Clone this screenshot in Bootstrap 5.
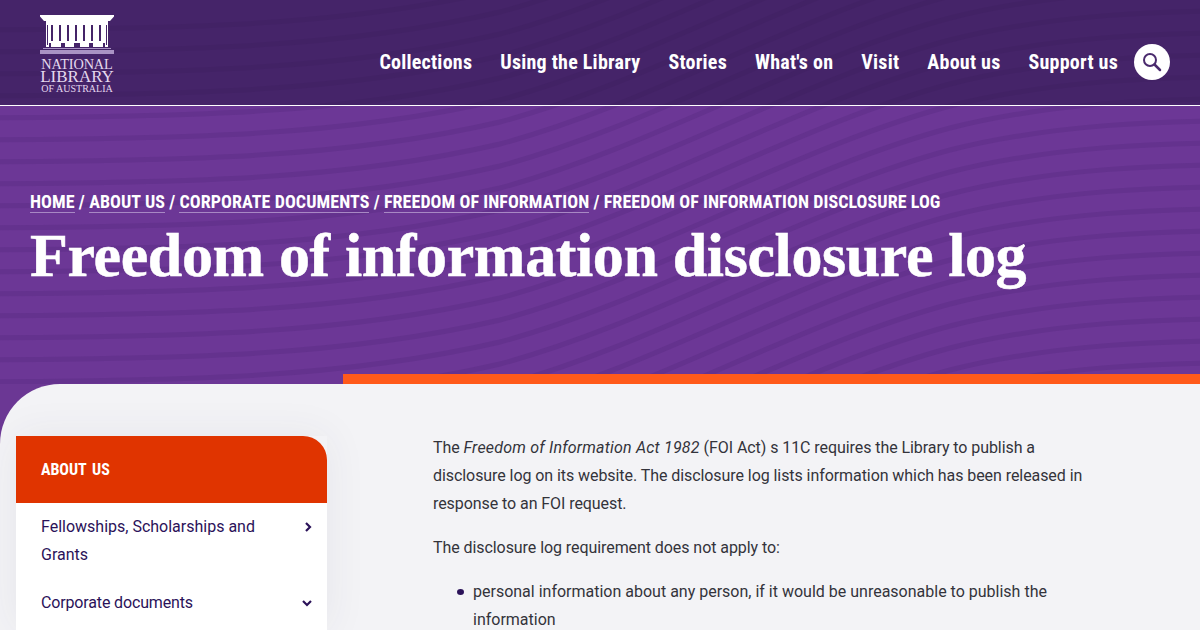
<!doctype html>
<html lang="en">
<head>
<meta charset="utf-8">
<title>Freedom of information disclosure log</title>
<link href="https://cdn.jsdelivr.net/npm/bootstrap@5.3.0/dist/css/bootstrap.min.css" rel="stylesheet">
<style>
html,body{height:630px;overflow:hidden}
body{background:#6b3794;font-family:Roboto,"Liberation Sans",sans-serif;font-size:16px;line-height:28px;color:#33333b}
.hero-zone{height:384px;background:#6c3796;position:relative;overflow:hidden}
.wave-layer{position:absolute;left:0;top:0;width:1200px;height:384px}
.top-strip{height:106px;background:rgba(40,22,70,.56);border-bottom:1px solid #fff;position:relative;padding:0 30px 0 40px}
.logo-box{width:74px;margin-top:15px;font-family:"Liberation Serif",serif;text-align:center;line-height:1;color:#e4d8ee}
.logo-box svg{display:block}
.logo-a{font-size:14.300px;line-height:11px;margin-top:5px;display:block;white-space:nowrap;letter-spacing:-.1px;height:11px}
.logo-b{font-size:17px;line-height:13px;display:block;white-space:nowrap;height:13px}
.logo-c{font-size:10px;line-height:8px;display:block;white-space:nowrap;margin-top:2px;height:8px}
.main-links{gap:28px}
.main-links a{color:#fff;text-decoration:none;font-weight:700;font-size:20px;font-stretch:condensed;letter-spacing:.235px;white-space:nowrap;line-height:24px}
.search-dot{width:36px;height:36px;border-radius:50%;background:#fff;margin-left:16px}
.nav-wrap{margin-top:44px}
.hero-text{position:relative;padding:83px 30px 0}
.crumbs{font-weight:700;font-size:18px;font-stretch:condensed;letter-spacing:.065px;line-height:26px;color:#fff;text-transform:uppercase;white-space:nowrap}
.crumbs a{color:#fff;text-decoration:none;border-bottom:1px solid #a888c4}
.page-title{font-family:"Liberation Serif",serif;font-weight:700;font-size:62px;line-height:72px;letter-spacing:-.38px;-webkit-text-stroke:.5px #fff;color:#fff;margin:4px 0 0;white-space:nowrap}
.orange-rule{position:absolute;left:343px;right:0;bottom:0;height:10px;background:#ff5a1a}
.body-zone{background:#f3f3f6;border-top-left-radius:60px;height:246px;overflow:hidden;padding:52px 0 0 16px}
.side-panel{width:311px;flex:none;box-shadow:0 0 40px rgba(60,50,90,.07)}
.side-head{height:67px;background:#e03400;color:#fff;font-weight:700;font-size:16px;font-stretch:condensed;letter-spacing:-.1px;word-spacing:2.500px;border-top-right-radius:24px;padding:20px 25px 0}
.side-list{background:#fff;padding-top:10px;height:143px}
.side-item{display:flex;justify-content:space-between;color:#2b1259;padding:0 14px 20px 25px;text-decoration:none}
.side-item span{max-width:225px}
.side-item.tight{letter-spacing:-.15px}
.side-item svg{flex:none;margin-top:9px}
.copy{margin:-2px 0 0 106px;width:656px;flex:none;letter-spacing:-.07px}
.copy p{margin:0 0 16px}
.copy em{letter-spacing:.2px}
.copy ul{list-style:none;padding:0 0 0 40px;margin:0;letter-spacing:0}
.copy li{position:relative}
.copy li i{position:absolute;left:-16px;top:11px;width:7px;height:6px;border-radius:50%;background:#2b1259}
</style>
</head>
<body>
<div class="hero-zone">
<svg class="wave-layer" viewBox="0 0 1200 384" aria-hidden="true">
<defs><path id="wv" d="M-100 30C200 30 350 25 500 -10C650 -50 800 -140 950 -180C1050 -205 1150 -210 1300 -210" fill="none" stroke="#562a80" stroke-width="5" stroke-opacity=".38"/></defs>
<use href="#wv" y="0"/><use href="#wv" y="22"/><use href="#wv" y="44"/><use href="#wv" y="66"/><use href="#wv" y="88"/><use href="#wv" y="110"/><use href="#wv" y="132"/><use href="#wv" y="154"/><use href="#wv" y="176"/><use href="#wv" y="198"/><use href="#wv" y="220"/><use href="#wv" y="242"/><use href="#wv" y="264"/><use href="#wv" y="286"/><use href="#wv" y="308"/><use href="#wv" y="330"/><use href="#wv" y="352"/><use href="#wv" y="374"/><use href="#wv" y="396"/><use href="#wv" y="418"/><use href="#wv" y="440"/><use href="#wv" y="462"/><use href="#wv" y="484"/><use href="#wv" y="506"/><use href="#wv" y="528"/><use href="#wv" y="550"/><use href="#wv" y="572"/><use href="#wv" y="594"/>
</svg>
<div class="top-strip d-flex justify-content-between align-items-start">
<a href="#" class="logo-box text-decoration-none">
<svg width="74" height="39" viewBox="0 0 74 39"><path fill="#fff" d="M0 0h74v1.500l-4 4.500H68v2H6V6H4L0 1.500z"/><path fill="#fff" fill-rule="evenodd" d="M6 8h62v24H6zM11 10v16h2V10zM19 10v16h2V10zM27 10v16h2V10zM35 10v16h2V10zM43 10v16h2V10zM51 10v16h2V10zM59 10v16h2V10zM7 10v20h1V10zM66 10v20h1V10zM9 28v4h2v-4zM21 28v4h4v-4zM34 28v4h6v-4zM49 28v4h4v-4zM63 28v4h2v-4z"/><path fill="#a993c4" d="M3 33h68v1H3zM0 35h74v4H0z"/></svg>
<span class="logo-a">NATIONAL</span><span class="logo-b">LIBRARY</span><span class="logo-c">OF AUSTRALIA</span>
</a>
<div class="nav-wrap d-flex align-items-center">
<nav class="main-links d-flex">
<a href="#">Collections</a><a href="#">Using the Library</a><a href="#">Stories</a><a href="#">What's on</a><a href="#">Visit</a><a href="#">About us</a><a href="#">Support us</a>
</nav>
<span class="search-dot d-flex align-items-center justify-content-center">
<svg width="20" height="20" viewBox="0 0 20 20" fill="none" stroke="#4a2a6d" stroke-width="2"><circle cx="8" cy="8" r="6"/><path d="M12.500 12.500l5.500 5.500" stroke-linecap="round" stroke-width="2.500"/></svg>
</span>
</div>
</div>
<div class="hero-text">
<div class="crumbs"><a href="#">Home</a> / <a href="#">About us</a> / <a href="#">Corporate documents</a> / <a href="#">Freedom of information</a> / Freedom of information disclosure log</div>
<h1 class="page-title">Freedom of information disclosure log</h1>
</div>
<div class="orange-rule"></div>
</div>
<div class="body-zone d-flex">
<aside class="side-panel">
<div class="side-head">ABOUT US</div>
<div class="side-list">
<a href="#" class="side-item"><span>Fellowships, Scholarships and Grants</span><svg width="10" height="10" viewBox="0 0 10 10" fill="none" stroke="#2b1259" stroke-width="2.200"><path d="M3 1l4 4-4 4"/></svg></a>
<a href="#" class="side-item tight"><span>Corporate documents</span><svg width="12" height="10" viewBox="0 0 12 10" fill="none" stroke="#2b1259" stroke-width="2.200"><path d="M2 3l4 4 4-4"/></svg></a>
</div>
</aside>
<main class="copy">
<p>The <em>Freedom of Information Act 1982</em> (FOI Act) s 11C requires the Library to publish a disclosure log on its website. The disclosure log lists information which has been released in response to an FOI request.</p>
<p>The disclosure log requirement does not apply to:</p>
<ul><li><i></i>personal information about any person, if it would be unreasonable to publish the information</li></ul>
</main>
</div>
</body>
</html>
